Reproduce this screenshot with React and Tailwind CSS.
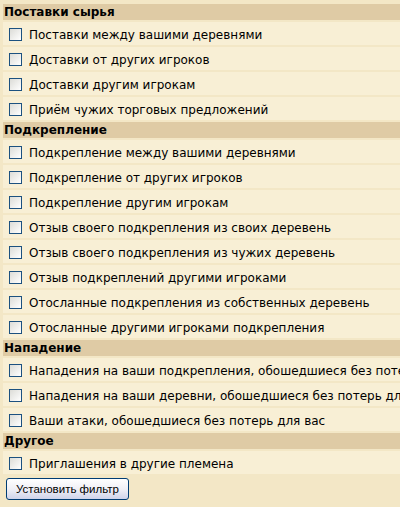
import React from "react";

const sections = [
  {
    title: "Поставки сырья",
    items: [
      "Поставки между вашими деревнями",
      "Доставки от других игроков",
      "Доставки другим игрокам",
      "Приём чужих торговых предложений",
    ],
  },
  {
    title: "Подкрепление",
    items: [
      "Подкрепление между вашими деревнями",
      "Подкрепление от других игроков",
      "Подкрепление другим игрокам",
      "Отзыв своего подкрепления из своих деревень",
      "Отзыв своего подкрепления из чужих деревень",
      "Отзыв подкреплений другими игроками",
      "Отосланные подкрепления из собственных деревень",
      "Отосланные другими игроками подкрепления",
    ],
  },
  {
    title: "Нападение",
    items: [
      "Нападения на ваши подкрепления, обошедшиеся без потерь для вас",
      "Нападения на ваши деревни, обошедшиеся без потерь для вас",
      "Ваши атаки, обошедшиеся без потерь для вас",
    ],
  },
  {
    title: "Другое",
    items: ["Приглашения в другие племена"],
  },
];

function Box() {
  return (
    <span className="inline-block w-[13px] h-[13px] shrink-0 border border-[#1c5180] bg-gradient-to-br from-[#dcdcd7] to-white" />
  );
}

export default function App() {
  return (
    <div
      className="w-[400px] h-[507px] overflow-hidden bg-[#f3e7c6] pt-[4px] pl-[3px] text-[12px] text-black"
      style={{ fontFamily: "'DejaVu Sans', Verdana, sans-serif" }}
    >
      <div className="flex flex-col gap-[2px] w-max min-w-[420px]">
        {sections.map((s) => (
          <React.Fragment key={s.title}>
            <div className="h-[16px] leading-[16px] bg-[#dfcba5] pl-[1px] font-bold whitespace-nowrap">
              {s.title}
            </div>
            {s.items.map((it) => (
              <div
                key={it}
                className="h-[23px] bg-[#f8efd5] flex items-center pt-[2px] pl-[6px] whitespace-nowrap"
              >
                <Box />
                <span className="ml-[7px]">{it}</span>
              </div>
            ))}
          </React.Fragment>
        ))}
      </div>
      <div className="mt-[4px] pl-[3px]">
        <button
          className="h-[22px] w-[123px] rounded-[3px] border border-[#003c74] bg-gradient-to-b from-white via-[#f0f0f6] to-[#cfd3ea] text-[11.5px] leading-[20px] text-black"
          style={{ fontFamily: "'Liberation Sans', Arial, sans-serif" }}
        >
          Установить фильтр
        </button>
      </div>
    </div>
  );
}
